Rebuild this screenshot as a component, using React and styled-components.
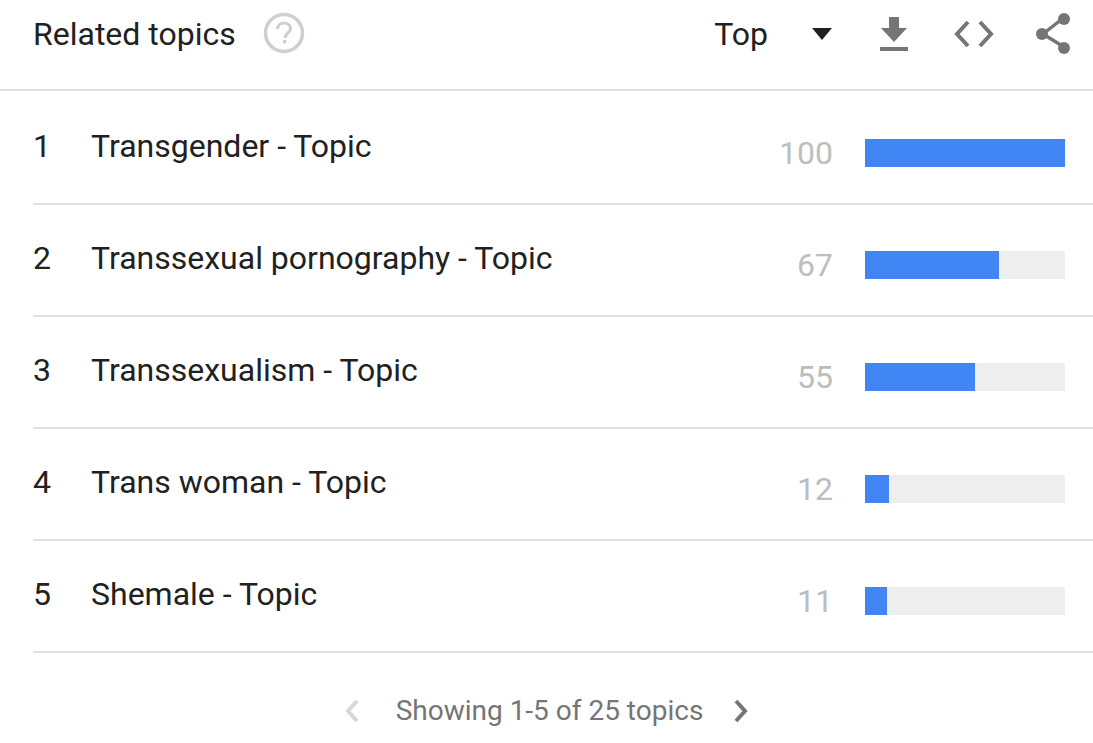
import React from "react";
import styled, { createGlobalStyle } from "styled-components";

const GlobalStyle = createGlobalStyle`
  html, body {
    margin: 0;
    padding: 0;
    background: #fff;
  }
  body {
    font-family: Roboto, "Liberation Sans", sans-serif;
  }
`;

const Widget = styled.div`
  width: 1093px;
  height: 743px;
  overflow: hidden;
  background: #fff;
`;

const Header = styled.div`
  display: flex;
  align-items: center;
  height: 91px;
  padding: 0 20px 22px 33px;
  box-sizing: border-box;
  border-bottom: 2px solid #e0e0e0;
`;

const Title = styled.div`
  font-size: 32px;
  line-height: 40px;
  color: #212121;
`;

const HelpIcon = styled.svg`
  width: 48px;
  height: 48px;
  margin: 0 0 2px 24px;
`;

const Spacer = styled.div`
  flex: 1;
`;

const SelectLabel = styled.div`
  font-size: 32px;
  line-height: 40px;
  color: #212121;
`;

const Caret = styled.div`
  width: 0;
  height: 0;
  margin: 0 46px 0 44px;
  border-left: 10.5px solid transparent;
  border-right: 10.5px solid transparent;
  border-top: 12px solid #212121;
`;

const ToolIcon = styled.svg`
  width: ${(p) => p.$w}px;
  height: 48px;
  margin-left: ${(p) => p.$gap}px;
  fill: #757575;
`;

const List = styled.div`
  padding: 2px 0 0 33px;
`;

const Row = styled.div`
  display: flex;
  align-items: center;
  height: 112px;
  padding-right: 28px;
  box-sizing: border-box;
  border-bottom: 2px solid #e0e0e0;
`;

const Rank = styled.div`
  width: 58px;
  margin-bottom: 4px;
  font-size: 32px;
  line-height: 40px;
  color: #212121;
`;

const Name = styled.div`
  flex: 1;
  margin-bottom: 4px;
  font-size: 32px;
  line-height: 40px;
  color: #212121;
`;

const Value = styled.div`
  width: 60px;
  margin: 10px 32px 0 0;
  text-align: right;
  font-size: 32px;
  line-height: 40px;
  color: #bdbdbd;
`;

const Track = styled.div`
  width: 200px;
  height: 28px;
  margin-top: 10px;
  background: #eeeeee;
`;

const Fill = styled.div`
  height: 100%;
  background: #4285f4;
`;

const Pager = styled.div`
  display: flex;
  align-items: center;
  justify-content: center;
  height: 116px;
  margin-bottom: 0;
`;

const PagerText = styled.div`
  font-size: 28px;
  line-height: 36px;
  color: #757575;
  margin: 0 30px 0 36px;
`;

const Chevron = styled.svg`
  width: 16px;
  height: 24px;
  fill: none;
  stroke: ${(p) => (p.$off ? "#d6d6d6" : "#757575")};
  stroke-width: 4;
`;

const topics = [
  { name: "Transgender - Topic", value: 100 },
  { name: "Transsexual pornography - Topic", value: 67 },
  { name: "Transsexualism - Topic", value: 55 },
  { name: "Trans woman - Topic", value: 12 },
  { name: "Shemale - Topic", value: 11 },
];

export default function App() {
  return (
    <Widget>
      <GlobalStyle />
      <Header>
        <Title>Related topics</Title>
        <HelpIcon viewBox="0 0 48 48">
          <circle cx="24" cy="24" r="18.5" fill="none" stroke="#cfcfcf" strokeWidth="3.5" />
          <path
            d="M17.5 20c0-3.6 2.9-6 6.5-6s6.5 2.4 6.5 5.6c0 4.4-5.5 4.6-5.5 9.4"
            fill="none"
            stroke="#cfcfcf"
            strokeWidth="3.2"
          />
          <rect x="23" y="31" width="3.4" height="3.4" fill="#cfcfcf" />
        </HelpIcon>
        <Spacer />
        <SelectLabel>Top</SelectLabel>
        <Caret />
        <ToolIcon viewBox="0 0 32 48" $w={32} $gap={0}>
          <path d="M11 7h10v11h8L16 32 3 18h8z" />
          <rect x="2" y="37" width="28" height="4" />
        </ToolIcon>
        <ToolIcon viewBox="0 0 42 48" $w={42} $gap={43}>
          <path
            d="M15 12 4 24l11 12M27 12l11 12-11 12"
            fill="none"
            stroke="#757575"
            strokeWidth="4"
          />
        </ToolIcon>
        <ToolIcon viewBox="0 0 38 48" $w={38} $gap={40}>
          <path d="M27 9 8 24l21 13" fill="none" stroke="#757575" strokeWidth="3.5" />
          <circle cx="29" cy="9" r="6" />
          <circle cx="7" cy="24" r="6" />
          <circle cx="29" cy="38" r="6" />
        </ToolIcon>
      </Header>
      <List>
        {topics.map((t, i) => (
          <Row key={t.name}>
            <Rank>{i + 1}</Rank>
            <Name>{t.name}</Name>
            <Value>{t.value}</Value>
            <Track>
              <Fill style={{ width: `${t.value}%` }} />
            </Track>
          </Row>
        ))}
      </List>
      <Pager>
        <Chevron $off viewBox="0 0 16 24">
          <path d="M13 2 4 12l9 10" />
        </Chevron>
        <PagerText>Showing 1-5 of 25 topics</PagerText>
        <Chevron viewBox="0 0 16 24">
          <path d="M3 2l9 10-9 10" />
        </Chevron>
      </Pager>
    </Widget>
  );
}
